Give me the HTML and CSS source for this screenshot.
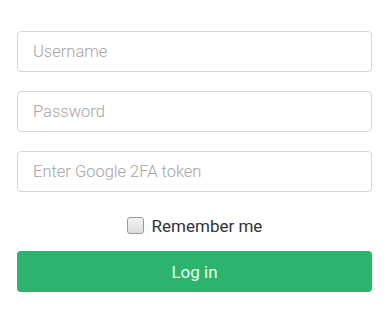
FILE: index.html
```html
<!DOCTYPE html>
<html>
<head>
<meta charset="utf-8">
<link rel="stylesheet" href="styles.css">
</head>
<body>
<form class="login">
  <input class="field" type="text" placeholder="Username">
  <input class="field" type="password" placeholder="Password">
  <input class="field" type="text" placeholder="Enter Google 2FA token">
  <label class="remember"><span class="box"></span><span>Remember me</span></label>
  <button class="btn" type="button">Log in</button>
</form>
</body>
</html>
```
FILE: styles.css
```css
html, body {
  margin: 0;
  background: #fff;
}
body {
  font-family: Roboto, "Liberation Sans", sans-serif;
}
.login {
  display: flex;
  flex-direction: column;
  gap: 19px;
  padding: 31px 18px 0 17px;
}
.field {
  box-sizing: border-box;
  height: 41px;
  width: 100%;
  margin: 0;
  border: 1px solid #d6d6d6;
  border-radius: 4px;
  padding: 0 15px;
  font-family: Roboto, "Liberation Sans", sans-serif;
  font-size: 16.5px;
  font-weight: 300;
  color: #333;
  background: #fff;
  outline: none;
}
.field::placeholder {
  color: #a4a4a4;
}
.remember {
  display: flex;
  align-items: center;
  justify-content: center;
  gap: 8px;
  height: 23px;
  margin-top: 3px;
  margin-bottom: -5px;
  font-size: 17px;
  color: #333;
}
.box {
  box-sizing: border-box;
  width: 17px;
  height: 17px;
  border: 1px solid #9a9a9a;
  border-radius: 3px;
  background: linear-gradient(#f4f4f4, #dcdcdc);
}
.btn {
  box-sizing: border-box;
  height: 41px;
  width: 100%;
  border: none;
  border-radius: 4px;
  background: #2cb36d;
  color: #e9fff0;
  font-family: Roboto, "Liberation Sans", sans-serif;
  font-size: 17px;
}
```
